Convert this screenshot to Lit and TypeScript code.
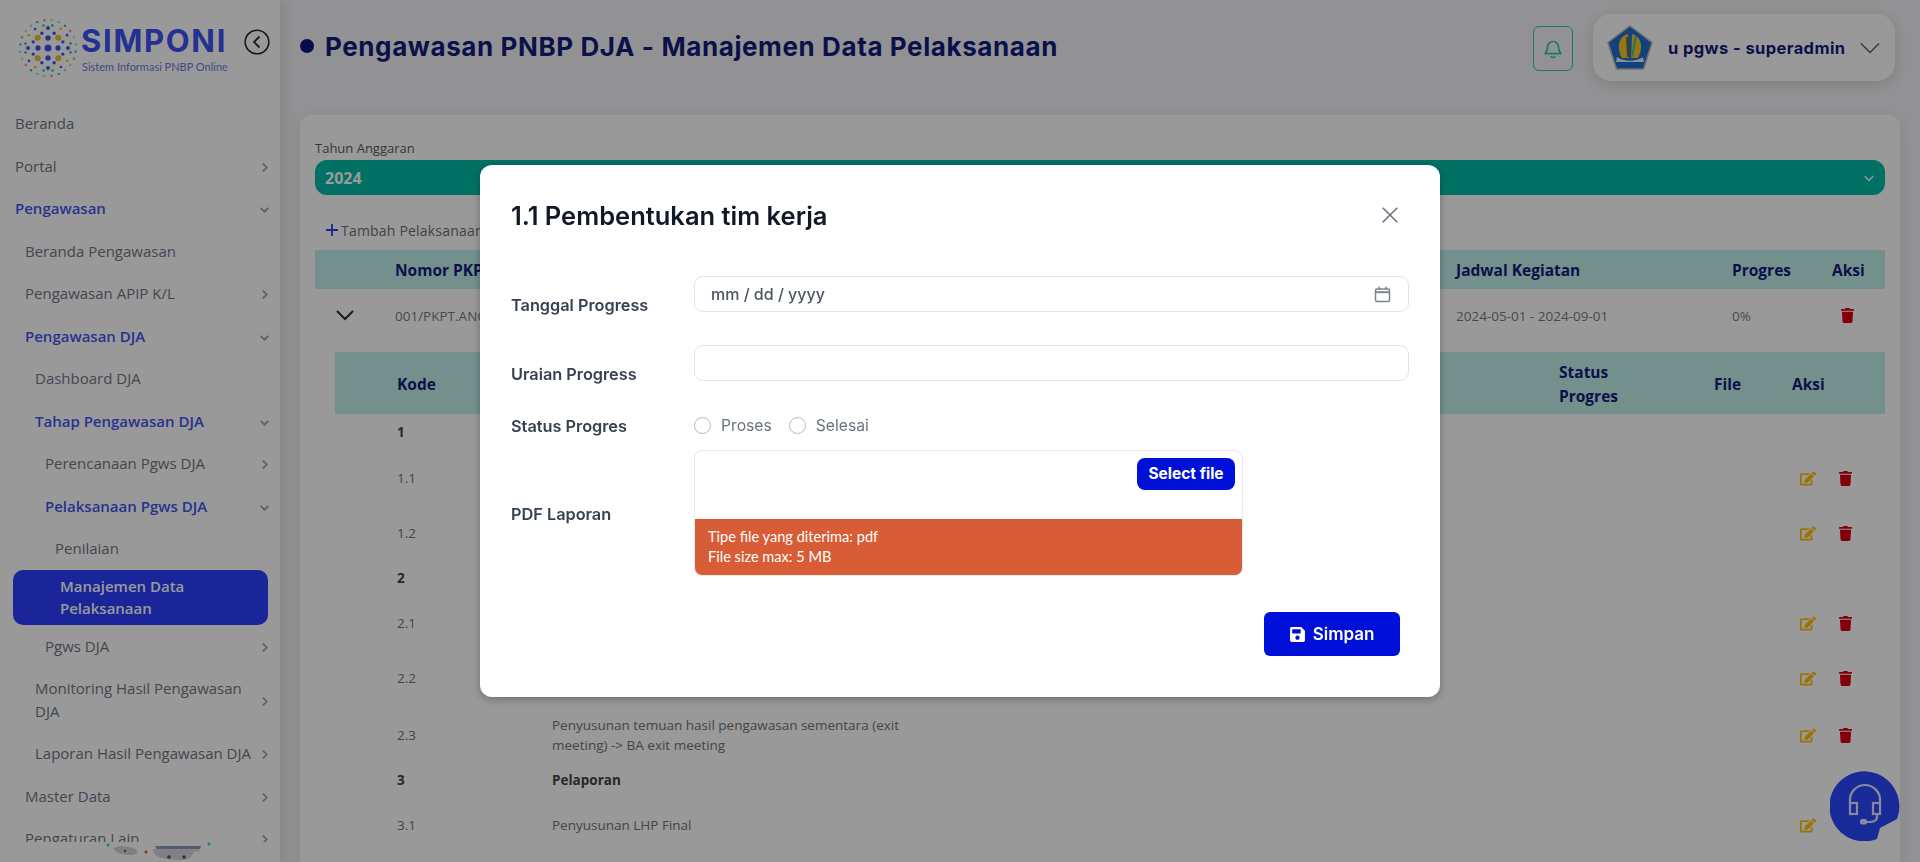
import { LitElement, html, css, svg } from 'lit';
import { customElement } from 'lit/decorators.js';

interface NavItem {
  label: string;
  level: number;
  arrow?: 'right' | 'down';
  open?: boolean;
  active?: boolean;
}

interface TaskRow {
  code: string;
  height: number;
  title?: string;
  bold?: boolean;
  actions?: boolean;
}

const NAV: NavItem[] = [
  { label: 'Beranda', level: 0 },
  { label: 'Portal', level: 0, arrow: 'right' },
  { label: 'Pengawasan', level: 0, arrow: 'down', open: true },
  { label: 'Beranda Pengawasan', level: 1 },
  { label: 'Pengawasan APIP K/L', level: 1, arrow: 'right' },
  { label: 'Pengawasan DJA', level: 1, arrow: 'down', open: true },
  { label: 'Dashboard DJA', level: 2 },
  { label: 'Tahap Pengawasan DJA', level: 2, arrow: 'down', open: true },
  { label: 'Perencanaan Pgws DJA', level: 3, arrow: 'right' },
  { label: 'Pelaksanaan Pgws DJA', level: 3, arrow: 'down', open: true },
  { label: 'Penilaian', level: 4 },
  { label: 'Manajemen Data Pelaksanaan', level: 4, active: true },
  { label: 'Pgws DJA', level: 3, arrow: 'right' },
  { label: 'Monitoring Hasil Pengawasan DJA', level: 2, arrow: 'right' },
  { label: 'Laporan Hasil Pengawasan DJA', level: 2, arrow: 'right' },
  { label: 'Master Data', level: 1, arrow: 'right' },
  { label: 'Pengaturan Lain', level: 1, arrow: 'right' },
];

const TASKS: TaskRow[] = [
  { code: '1', height: 36, bold: true },
  { code: '1.1', height: 56, actions: true },
  { code: '1.2', height: 54, actions: true },
  { code: '2', height: 36, bold: true },
  { code: '2.1', height: 54, actions: true },
  { code: '2.2', height: 56, actions: true },
  { code: '2.3', height: 58, actions: true, title: 'Penyusunan temuan hasil pengawasan sementara (exit meeting) -> BA exit meeting' },
  { code: '3', height: 32, bold: true, title: 'Pelaporan' },
  { code: '3.1', height: 58, actions: true, title: 'Penyusunan LHP Final' },
];

const chevronRight = html`<svg class="nav-arrow" viewBox="0 0 10 10"><path d="M3.5 1.5 7 5 3.5 8.500" fill="none" stroke="currentColor" stroke-width="1.600"/></svg>`;
const chevronDown = html`<svg class="nav-arrow" viewBox="0 0 10 10"><path d="M1.500 3.500 5 7l3.500-3.500" fill="none" stroke="currentColor" stroke-width="1.600"/></svg>`;

const trashIcon = html`<svg class="act trash" viewBox="0 0 448 512"><path fill="currentColor" d="M432 32H312l-9.400-18.700A24 24 0 0 0 281.100 0H166.800a23.720 23.720 0 0 0-21.400 13.300L136 32H16A16 16 0 0 0 0 48v32a16 16 0 0 0 16 16h416a16 16 0 0 0 16-16V48a16 16 0 0 0-16-16zM53.200 467a48 48 0 0 0 47.900 45h245.800a48 48 0 0 0 47.900-45L416 128H32z"/></svg>`;
const editIcon = html`<svg class="act edit" viewBox="0 0 576 512"><path fill="currentColor" d="M402.600 83.200l90.200 90.200c3.800 3.800 3.800 10 0 13.800L274.400 405.600l-92.800 10.300c-12.400 1.400-22.900-9.100-21.500-21.500l10.300-92.800L388.800 83.200c3.800-3.800 10-3.800 13.800 0zm162-22.900l-48.800-48.800c-15.200-15.200-39.900-15.200-55.200 0l-35.400 35.400c-3.800 3.800-3.800 10 0 13.800l90.200 90.200c3.800 3.800 10 3.800 13.800 0l35.400-35.400c15.200-15.300 15.200-40 0-55.200zM384 346.200V448H64V128h229.800c3.200 0 6.200-1.300 8.500-3.500l40-40c7.600-7.600 2.200-20.500-8.500-20.500H48C21.500 64 0 85.500 0 112v352c0 26.500 21.500 48 48 48h352c26.500 0 48-21.500 48-48V306.200c0-10.700-12.900-16-20.500-8.500l-40 40c-2.200 2.300-3.500 5.300-3.500 8.500z"/></svg>`;

// logo: rings of dots around a centre, the colours repeat round each ring
function logoDots() {
  const rings = [
    { r: 10, n: 4, size: 2.700, colors: ['#3f56ff'], offset: 0 },
    { r: 14.500, n: 4, size: 3, colors: ['#f2c40f'], offset: 45 },
    { r: 16, n: 8, size: 1.700, colors: ['#3f56ff'], offset: 22.500 },
    { r: 20, n: 4, size: 2, colors: ['#3f56ff'], offset: 0 },
    { r: 23, n: 16, size: 1.300, colors: ['#2bc7a8', '#f2c40f', '#3f56ff', '#2bc7a8'], offset: 11 },
    { r: 28, n: 24, size: 1.200, colors: ['#2bc7a8', '#e99a8c', '#f2d36b', '#8fd6c8'], offset: 7.500 },
  ];
  const dots = [svg`<circle cx="48" cy="48" r="3.500" fill="#3f56ff"/>`];
  for (const ring of rings) {
    for (let i = 0; i < ring.n; i++) {
      const a = ((ring.offset + (i * 360) / ring.n) * Math.PI) / 180;
      const cx = 48 + ring.r * Math.cos(a);
      const cy = 48 + ring.r * Math.sin(a);
      dots.push(svg`<circle cx=${cx} cy=${cy} r=${ring.size} fill=${ring.colors[i % ring.colors.length]}/>`);
    }
  }
  return dots;
}

@customElement('app-root')
export class AppRoot extends LitElement {
  static styles = css`
    :host {
      display: block;
      font-family: "Open Sans", sans-serif;
    }
    * {
      box-sizing: border-box;
    }
    .page {
      display: flex;
      width: 1920px;
      height: 862px;
      overflow: hidden;
      background: #f3f3f7;
    }

    /* sidebar */
    .sidebar {
      width: 280px;
      flex: none;
      display: flex;
      flex-direction: column;
      background: #fff;
      box-shadow: 3px 0 14px rgba(0, 0, 0, 0.1);
      z-index: 1;
    }
    .brand {
      height: 102px;
      flex: none;
      display: flex;
      align-items: flex-start;
      padding: 15px 0 0 15px;
    }
    .brand-dots {
      width: 66px;
      height: 66px;
      flex: none;
    }
    .brand-text {
      margin: 8px 0 0 0;
      width: 150px;
      flex: none;
    }
    .brand-name {
      font-family: Inter, sans-serif;
      font-weight: 700;
      font-size: 31px;
      line-height: 36px;
      letter-spacing: 1.700px;
      color: #3d52f5;
    }
    .brand-sub {
      font-family: Lato, sans-serif;
      font-size: 11px;
      line-height: 14px;
      margin: 1px 0 0 1px;
      white-space: nowrap;
      color: #6f7ae0;
    }
    .back {
      width: 26px;
      height: 26px;
      margin: 14px 0 0 13px;
      flex: none;
      color: #2a2a2a;
    }
    .nav {
      flex: 1;
      min-height: 0;
      overflow: hidden;
    }
    .nav-item {
      display: flex;
      align-items: center;
      justify-content: space-between;
      padding: 10px 10px 10px 15px;
      font-size: 15px;
      line-height: 22.500px;
      color: #6f7785;
    }
    .nav-item.open {
      color: #3f56ee;
      font-weight: 600;
    }
    .nav-item.active {
      margin: 0 12px 0 13px;
      padding: 5.500px 25px 5.500px 47px;
      border-radius: 10px;
      background: #2b3fff;
      color: #fff;
      font-weight: 600;
      line-height: 22px;
      height: 55px;
    }
    .nav-arrow {
      width: 11px;
      height: 11px;
      flex: none;
      margin: 3px 0 0 6px;
      color: #9aa0a8;
    }
    .nav-foot {
      height: 20px;
      flex: none;
      background: #fff;
    }
    .nav-foot svg {
      display: block;
      width: 120px;
      height: 20px;
      margin-left: 95px;
    }

    /* main */
    .main {
      flex: 1;
      min-width: 0;
      padding: 14px 25px 0 20px;
    }
    .header {
      height: 67px;
      margin-bottom: 34px;
      display: flex;
      align-items: center;
    }
    .title-dot {
      width: 14px;
      height: 14px;
      border-radius: 50%;
      background: #0d1580;
      margin-bottom: 3px;
    }
    h1 {
      flex: 1;
      margin: 0 0 3px 11px;
      font-family: Inter, sans-serif;
      font-weight: 700;
      font-size: 26px;
      letter-spacing: 0.600px;
      color: #141c7c;
    }
    .bell {
      width: 40px;
      height: 45px;
      margin: 2px 20px 0 0;
      display: flex;
      align-items: center;
      justify-content: center;
      border: 1.500px solid #2fc8b2;
      border-radius: 6px;
      color: #2fc8b2;
    }
    .bell svg {
      width: 20px;
      height: 20px;
    }
    .user {
      width: 302px;
      height: 67px;
      display: flex;
      align-items: center;
      padding: 0 15px 0 14px;
      border-radius: 18px;
      background: #fff;
      box-shadow: 0 4px 14px rgba(0, 0, 0, 0.12);
    }
    .user-logo {
      width: 46px;
      height: 46px;
      flex: none;
    }
    .user-name {
      flex: 1;
      margin-left: 15px;
      font-family: Inter, sans-serif;
      font-weight: 700;
      font-size: 16.500px;
      letter-spacing: 0.400px;
      white-space: nowrap;
      color: #141c7c;
    }
    .user-chev {
      width: 20px;
      height: 12px;
      margin-right: 0;
      color: #5a6270;
    }
    .card {
      margin-right: -5px;
      height: 760px;
      padding: 24px 15px 0;
      border-radius: 12px;
      background: #fff;
      box-shadow: 0 4px 16px rgba(0, 0, 0, 0.08);
    }
    .year-label {
      font-size: 13px;
      line-height: 18px;
      margin-bottom: 3px;
      color: #555c66;
    }
    .year {
      height: 35px;
      display: flex;
      align-items: center;
      justify-content: space-between;
      padding: 0 10px;
      border-radius: 12px;
      background: #00bda7;
      font-weight: 700;
      font-size: 16px;
      color: #fff;
    }
    .year svg {
      width: 12px;
      height: 12px;
      color: #fff;
    }
    .add {
      display: flex;
      align-items: center;
      height: 20px;
      margin: 25px 0 10px 11px;
      gap: 3px;
      font-size: 14px;
      letter-spacing: 0.2px;
      color: #6a6f78;
    }
    .add svg {
      width: 12px;
      height: 12px;
      color: #2b3fff;
    }
    .head {
      background: #c0f1ec;
      font-weight: 700;
      font-size: 15.500px;
      color: #141c7c;
    }
    .plan-head,
    .plan-row {
      display: grid;
      grid-template-columns: 80px 1061px 276px 100px 53px;
      align-items: center;
    }
    .plan-head {
      height: 39px;
    }
    .plan-row {
      height: 63px;
      padding-bottom: 10px;
      font-size: 13.500px;
      color: #777c84;
    }
    .expander {
      width: 18px;
      height: 11px;
      margin-left: 21px;
      color: #2a2e36;
    }
    .act {
      display: block;
      width: 13px;
      height: 15px;
    }
    .act.trash {
      color: #dc0010;
    }
    .act.edit {
      width: 16px;
      color: #ffc107;
    }
    .plan-row .act {
      margin-left: 9px;
    }
    .tasks {
      margin-left: 20px;
    }
    .task-head,
    .task-row {
      display: grid;
      grid-template-columns: 62px 155px 1007px 155px 78px 93px;
      align-items: center;
    }
    .task-head {
      height: 62px;
      padding-top: 2px;
      line-height: 24px;
    }
    .task-row {
      font-size: 13.500px;
      line-height: 20px;
      color: #6f747c;
    }
    .task-row.bold {
      font-weight: 700;
      color: #3e434b;
    }
    .task-title {
      max-width: 350px;
    }
    .task-code {
      grid-column: 2;
    }
    .task-text {
      grid-column: 3;
    }
    .task-acts {
      grid-column: 6;
      display: flex;
      align-items: center;
      gap: 23px;
      margin-left: 8px;
    }
    .help {
      position: fixed;
      left: 1830px;
      top: 771px;
      width: 70px;
      height: 70px;
    }

    /* modal */
    .overlay {
      position: fixed;
      inset: 0;
      z-index: 5;
      display: flex;
      justify-content: center;
      align-items: flex-start;
      padding-top: 165px;
      background: rgba(0, 0, 0, 0.4);
    }
    .modal {
      width: 960px;
      height: 532px;
      padding: 0 31px;
      border-radius: 12px;
      background: #fff;
      box-shadow: 0 2px 8px rgba(0, 0, 0, 0.3);
      font-family: Inter, sans-serif;
    }
    .modal-head {
      height: 100px;
      margin-bottom: 11px;
      display: flex;
      align-items: center;
      justify-content: space-between;
    }
    h2 {
      margin: 0;
      font-size: 25.500px;
      font-weight: 600;
      color: #111827;
    }
    .close {
      width: 16px;
      height: 16px;
      margin-right: 11px;
      color: #6b7280;
    }
    .row {
      display: flex;
    }
    .row-label {
      width: 183px;
      flex: none;
      padding-top: 18.500px;
      font-size: 16.300px;
      line-height: 20px;
      font-weight: 600;
      color: #374151;
    }
    .row.flat .row-label {
      padding-top: 0.500px;
    }
    .row.mid .row-label {
      padding-top: 1px;
      align-self: center;
    }
    .field {
      flex: 1;
      height: 36px;
      display: flex;
      align-items: center;
      justify-content: space-between;
      padding: 0 17px 0 16px;
      border: 1.500px solid #e1e4ea;
      border-radius: 9px;
      background: #fff;
      font: inherit;
      font-size: 16px;
      font-weight: 500;
      color: #4b5563;
      outline: none;
    }
    .field svg {
      width: 17px;
      height: 17px;
      color: #7c838f;
    }
    .r2 {
      margin-top: 30.500px;
    }
    .r3 {
      margin-top: 31.500px;
    }
    .r4 {
      margin-top: 14.500px;
    }
    .radios {
      display: flex;
      align-items: center;
      height: 20px;
      font-size: 15.700px;
      color: #6b7280;
    }
    .radios input {
      appearance: none;
      width: 17px;
      height: 17px;
      margin: 0 10px 0 0;
      border: 1.500px solid #b4b9c2;
      border-radius: 50%;
      background: #fff;
    }
    .radios label {
      display: flex;
      align-items: center;
      margin-right: 17px;
    }
    .upload {
      width: 549px;
      height: 126px;
      display: flex;
      flex-direction: column;
      border: 1.500px solid #e8e9ec;
      border-radius: 8px;
      overflow: hidden;
    }
    .upload-top {
      flex: 1;
      display: flex;
      justify-content: flex-end;
      align-items: flex-start;
      padding: 6.500px 7px 0 0;
    }
    .pick {
      width: 98px;
      height: 32px;
      border: 0;
      border-radius: 8px;
      background: #0010d8;
      font: inherit;
      font-weight: 700;
      font-size: 15.500px;
      color: #fff;
    }
    .upload-note {
      height: 56px;
      padding: 8px 13px;
      background: #d85c36;
      font-family: Lato, sans-serif;
      font-size: 14.600px;
      line-height: 20px;
      color: #fff;
    }
    .modal-foot {
      margin: 36px 9px 0 0;
      display: flex;
      justify-content: flex-end;
    }
    .save {
      width: 136px;
      height: 44px;
      display: flex;
      align-items: center;
      justify-content: center;
      gap: 8px;
      border: 0;
      border-radius: 6px;
      background: #0010d8;
      font: inherit;
      font-weight: 600;
      font-size: 17px;
      color: #fff;
    }
    .save svg {
      width: 15px;
      height: 17px;
    }
  `;

  private navRow(item: NavItem) {
    if (item.active) {
      return html`<div class="nav-item active">${item.label}</div>`;
    }
    return html`
      <div class="nav-item ${item.open ? 'open' : ''}" style="padding-left: ${15 + item.level * 10}px">
        <span>${item.label}</span>
        ${item.arrow === 'right' ? chevronRight : item.arrow === 'down' ? chevronDown : ''}
      </div>
    `;
  }

  private taskRow(row: TaskRow) {
    return html`
      <div class="task-row ${row.bold ? 'bold' : ''}" style="height: ${row.height}px">
        <div class="task-code">${row.code}</div>
        <div class="task-text"><div class="task-title">${row.title ?? ''}</div></div>
        ${row.actions ? html`<div class="task-acts">${editIcon}${trashIcon}</div>` : ''}
      </div>
    `;
  }

  render() {
    return html`
      <div class="page">
        <aside class="sidebar">
          <div class="brand">
            <svg class="brand-dots" viewBox="15 15 66 66">${logoDots()}</svg>
            <div class="brand-text">
              <div class="brand-name">SIMPONI</div>
              <div class="brand-sub">Sistem Informasi PNBP Online</div>
            </div>
            <svg class="back" viewBox="0 0 26 26">
              <circle cx="13" cy="13" r="11.800" fill="none" stroke="currentColor" stroke-width="1.600"/>
              <path d="M15.500 7.500 10 13l5.500 5.500" fill="none" stroke="currentColor" stroke-width="1.800"/>
            </svg>
          </div>
          <nav class="nav">${NAV.map(item => this.navRow(item))}</nav>
          <div class="nav-foot">
            <svg viewBox="0 0 120 20">
              <circle cx="13" cy="3" r="1.500" fill="#2bd9b8"/>
              <circle cx="51" cy="10" r="1.500" fill="#f0492a"/>
              <circle cx="114" cy="2" r="1.500" fill="#2bd9b8"/>
              <path d="M18 6c6-3 18-2 24 2 1 3-2 5-6 5-7 0-15-1-18-7z" fill="#d3d4d8"/>
              <path d="M58 7c14-3 32-3 44-2l4 6-4-2c-5 0-4 9-14 9-14 0-30-1-30-11z" fill="#d7d8dc"/>
              <path d="M60 4h46l-1 3H62z" fill="#8b9bc4"/>
              <circle cx="30" cy="9" r="1.200" fill="#666"/>
              <circle cx="74" cy="15" r="1.800" fill="#555"/>
              <circle cx="89" cy="15" r="1.800" fill="#555"/>
            </svg>
          </div>
        </aside>

        <main class="main">
          <header class="header">
            <span class="title-dot"></span>
            <h1>Pengawasan PNBP DJA - Manajemen Data Pelaksanaan</h1>
            <div class="bell">
              <svg viewBox="0 0 24 24" fill="none" stroke="currentColor" stroke-width="2" stroke-linejoin="round">
                <path d="M12 3a6.500 6.500 0 0 0-6.500 6.500c0 5-1.500 6.500-3 8h19c-1.500-1.500-3-3-3-8A6.500 6.500 0 0 0 12 3z"/>
                <path d="M9.500 20.500a2.700 2.700 0 0 0 5 0"/>
              </svg>
            </div>
            <div class="user">
              <svg class="user-logo" viewBox="0 0 46 46">
                <path d="M23 1 45 17.500 36.500 44h-27L1 17.500z" fill="#1f6fd0" stroke="#b9b9b9" stroke-width="1.500"/>
                <path d="M21 9C12 11 9 22 15 33h7zM25 9c9 2 12 13 6 24h-7z" fill="#f7c51e"/>
                <path d="M19 12h3l1 20h-3z" fill="#5a6b7a"/>
                <path d="M28 10l2 1-4 21h-2z" fill="#3fc0b0"/>
                <path d="M10 32c8 5 18 5 26 0l1 5H9z" fill="#eeeeee"/>
              </svg>
              <div class="user-name">u pgws - superadmin</div>
              <svg class="user-chev" viewBox="0 0 20 12"><path d="M1 1.500l9 9 9-9" fill="none" stroke="currentColor" stroke-width="1.500"/></svg>
            </div>
          </header>

          <section class="card">
            <div class="year-label">Tahun Anggaran</div>
            <div class="year">
              <span>2024</span>
              <svg viewBox="0 0 10 10"><path d="M1.500 3.500 5 7l3.500-3.500" fill="none" stroke="currentColor" stroke-width="1.200"/></svg>
            </div>
            <div class="add">
              <svg viewBox="0 0 12 12"><path d="M6 0v12M0 6h12" stroke="currentColor" stroke-width="1.800"/></svg>
              <span>Tambah Pelaksanaan</span>
            </div>

            <div class="plan-head head">
              <span></span><span>Nomor PKPT</span><span>Jadwal Kegiatan</span><span>Progres</span><span>Aksi</span>
            </div>
            <div class="plan-row">
              <svg class="expander" viewBox="0 0 18 11"><path d="M1 1l8 8 8-8" fill="none" stroke="currentColor" stroke-width="2"/></svg>
              <span>001/PKPT.ANG</span>
              <span>2024-05-01 - 2024-09-01</span>
              <span>0%</span>
              ${trashIcon}
            </div>

            <div class="tasks">
              <div class="task-head head">
                <span></span><span>Kode</span><span></span>
                <span>Status<br />Progres</span><span>File</span><span>Aksi</span>
              </div>
              ${TASKS.map(row => this.taskRow(row))}
            </div>
          </section>
        </main>

        <svg class="help" viewBox="0 0 70 70">
          <path d="M67 48A35 35 0 1 0 47 68L50 57Z" fill="#2b46ff"/>
          <g fill="none" stroke="#dfe6ff" stroke-width="2.200">
            <path d="M20 34v-5a15 15 0 0 1 30 0v5"/>
            <rect x="20" y="32" width="7" height="11"/>
            <rect x="43" y="32" width="7" height="11"/>
            <path d="M47 43v3c0 3-3 5-8 5h-3"/>
          </g>
          <rect x="30" y="48" width="7" height="5.500" rx="2" fill="#dfe6ff"/>
        </svg>

        <div class="overlay">
          <div class="modal">
            <div class="modal-head">
              <h2>1.1 Pembentukan tim kerja</h2>
              <svg class="close" viewBox="0 0 16 16"><path d="M.7.7l14.600 14.600M15.300.7.700 15.300" stroke="currentColor" stroke-width="1.600"/></svg>
            </div>
            <div class="row">
              <div class="row-label">Tanggal Progress</div>
              <div class="field">
                <span>mm / dd / yyyy</span>
                <svg viewBox="0 0 17 17" fill="none" stroke="currentColor" stroke-width="1.500">
                  <rect x="1.500" y="3" width="14" height="12.500" rx="1.500"/>
                  <path d="M1.500 6.200h14" stroke-width="2"/>
                  <path d="M5 .8v3M12 .8v3"/>
                </svg>
              </div>
            </div>
            <div class="row r2">
              <div class="row-label">Uraian Progress</div>
              <input class="field" type="text" />
            </div>
            <div class="row flat r3">
              <div class="row-label">Status Progres</div>
              <div class="radios">
                <label><input type="radio" name="status" />Proses</label>
                <label><input type="radio" name="status" />Selesai</label>
              </div>
            </div>
            <div class="row mid r4">
              <div class="row-label">PDF Laporan</div>
              <div class="upload">
                <div class="upload-top"><button class="pick">Select file</button></div>
                <div class="upload-note">Tipe file yang diterima: pdf<br />File size max: 5 MB</div>
              </div>
            </div>
            <div class="modal-foot">
              <button class="save">
                <svg viewBox="0 0 448 512"><path fill="currentColor" d="M433.941 129.941l-83.882-83.882A48 48 0 0 0 316.118 32H48C21.490 32 0 53.490 0 80v352c0 26.510 21.490 48 48 48h352c26.510 0 48-21.490 48-48V163.882a48 48 0 0 0-14.059-33.941zM224 416c-35.346 0-64-28.654-64-64 0-35.346 28.654-64 64-64s64 28.654 64 64c0 35.346-28.654 64-64 64zm96-304.520V212c0 6.627-5.373 12-12 12H76c-6.627 0-12-5.373-12-12V108c0-6.627 5.373-12 12-12h228.520c3.183 0 6.235 1.264 8.485 3.515l3.480 3.480A11.996 11.996 0 0 1 320 111.480z"/></svg>
                Simpan
              </button>
            </div>
          </div>
        </div>
      </div>
    `;
  }
}
